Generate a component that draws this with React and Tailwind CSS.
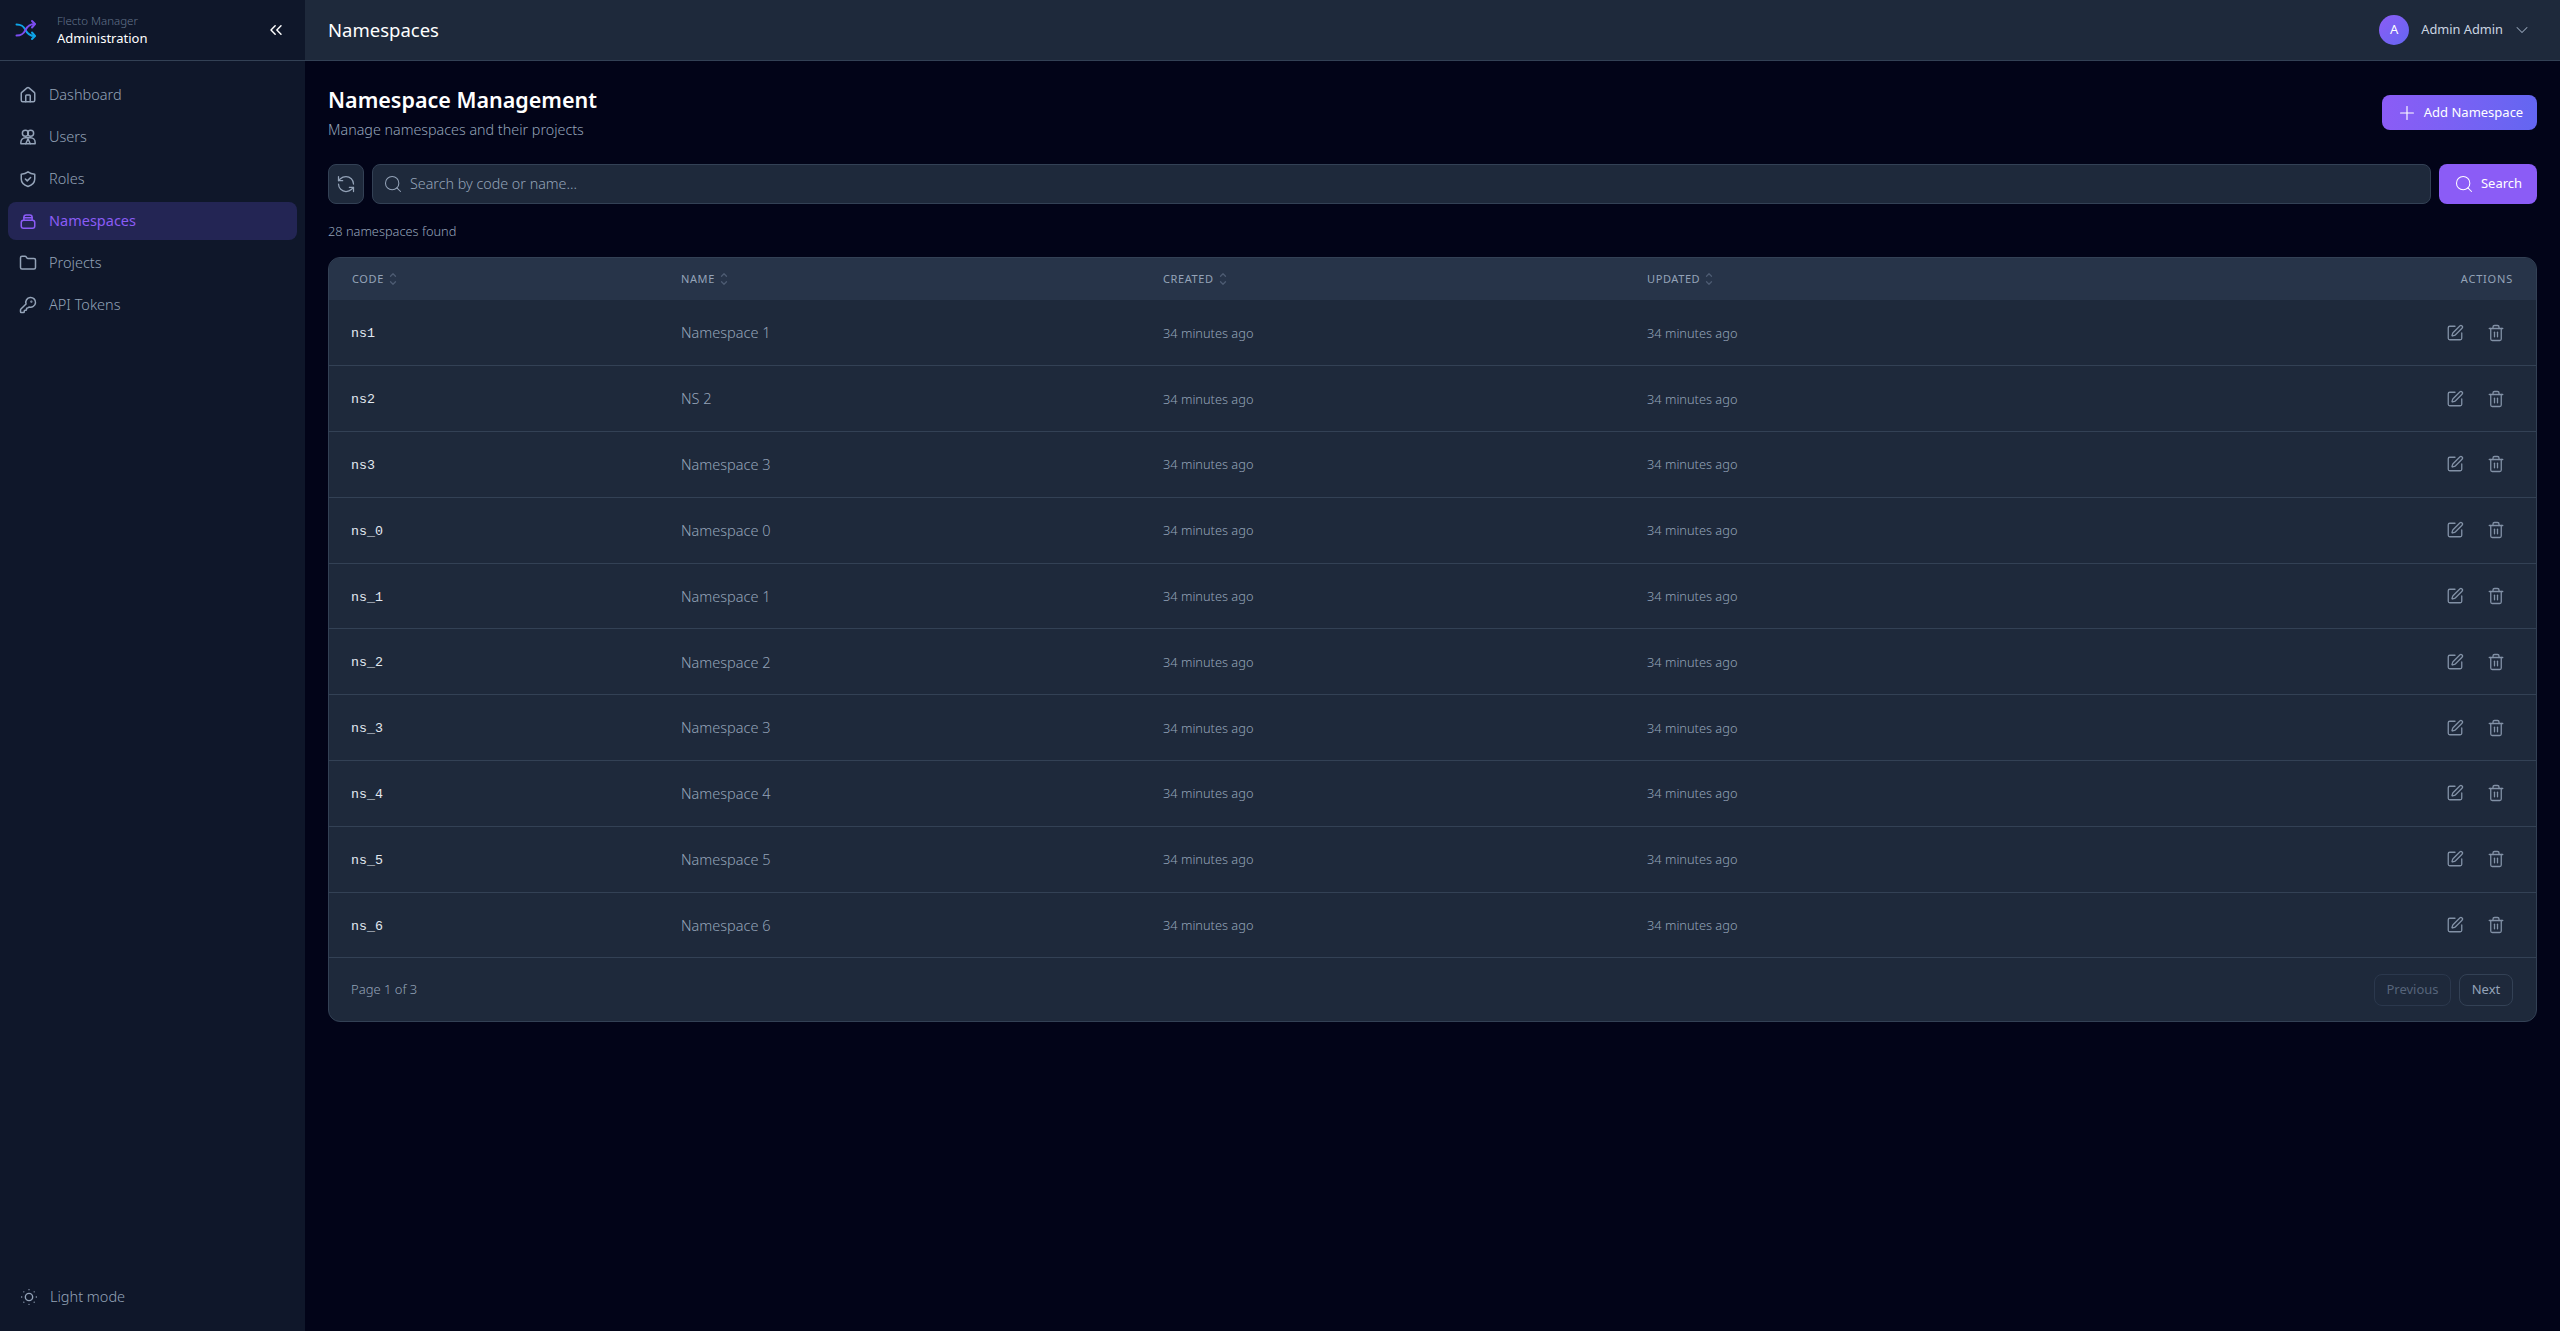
import React from "react";
import { House, Folder, KeyRound, ChevronsLeft, ChevronDown, Plus, Search, RefreshCcw, SquarePen, Trash2, SunDim, ChevronUp } from "lucide-react";

const F = "font-['Noto_Sans','Open_Sans',sans-serif]";

function Logo() {
  return (
    <svg width="22" height="22" viewBox="0 0 22 22" fill="none" strokeLinecap="round" strokeLinejoin="round" strokeWidth="2">
      <path d="M1.500 5.500c5 0 7 1.500 9 5.500s4 6 9 6" stroke="#0ea5e9" />
      <path d="M17 13.500l3 3.500-3 3" stroke="#0ea5e9" />
      <path d="M1.500 16.500c5 0 7-1.500 9-5.500s4-6 9-6" stroke="#7c4df0" />
      <path d="M17 2l3 3-3 3.500" stroke="#7c4df0" />
    </svg>
  );
}

function UsersIcon() {
  return (
    <svg width="18" height="18" viewBox="0 0 24 24" fill="none" stroke="currentColor" strokeWidth="2" strokeLinecap="round" strokeLinejoin="round">
      <circle cx="8.500" cy="7" r="4" />
      <circle cx="15.500" cy="7" r="4" />
      <path d="M2.500 21v-2a6 6 0 0 1 6-6h7a6 6 0 0 1 6 6v2z" />
      <path d="M12 14.500l3 6.500M12 14.500l-3 6.500" />
    </svg>
  );
}

function ShieldCheckIcon() {
  return (
    <svg width="18" height="18" viewBox="0 0 24 24" fill="none" stroke="currentColor" strokeWidth="2" strokeLinecap="round" strokeLinejoin="round">
      <path d="M12 2.500c2.500 2 5.500 3 9 3.200v6.300c0 5-3.500 8.200-9 10-5.500-1.800-9-5-9-10V5.700c3.500-.2 6.500-1.200 9-3.200z" />
      <path d="M8.500 12l2.500 2.500 4.500-4.500" />
    </svg>
  );
}

function StackIcon() {
  return (
    <svg width="18" height="18" viewBox="0 0 24 24" fill="none" stroke="currentColor" strokeWidth="2" strokeLinecap="round" strokeLinejoin="round">
      <rect x="3" y="11" width="18" height="10.500" rx="3" />
      <path d="M6.500 11V7a3 3 0 0 1 3-3h5a3 3 0 0 1 3 3v4" />
      <path d="M6.500 7.500h11" />
    </svg>
  );
}

const nav = [
  ["Dashboard", <House size={18} strokeWidth={2} />],
  ["Users", <UsersIcon />],
  ["Roles", <ShieldCheckIcon />],
  ["Namespaces", <StackIcon />],
  ["Projects", <Folder size={18} strokeWidth={2} />],
  ["API Tokens", <KeyRound size={18} strokeWidth={2} />],
];

const rows = [
  ["ns1", "Namespace 1"],
  ["ns2", "NS 2"],
  ["ns3", "Namespace 3"],
  ["ns_0", "Namespace 0"],
  ["ns_1", "Namespace 1"],
  ["ns_2", "Namespace 2"],
  ["ns_3", "Namespace 3"],
  ["ns_4", "Namespace 4"],
  ["ns_5", "Namespace 5"],
  ["ns_6", "Namespace 6"],
];

function SortHead({ children }) {
  return (
    <span className="inline-flex items-center gap-[4px]">
      {children}
      <span className="flex flex-col text-[#4d5b72]">
        <ChevronUp size={10} strokeWidth={3} className="-mb-[2px]" />
        <ChevronDown size={10} strokeWidth={3} />
      </span>
    </span>
  );
}

export default function App() {
  return (
    <div className={`flex h-screen bg-[#020418] ${F} font-light`}>
      <aside className="flex w-[305px] shrink-0 flex-col bg-[#0f172a]">
        <div className="flex h-[61px] items-center border-b border-[#334155] pl-[15px] pr-[19px]">
          <Logo />
          <div className="ml-[20px] flex flex-col">
            <span className="text-[11.500px] leading-[17px] text-[#64748b]">Flecto Manager</span>
            <span className="text-[13px] font-normal leading-[19px] text-white">Administration</span>
          </div>
          <ChevronsLeft size={20} strokeWidth={1.75} className="ml-auto text-white" />
        </div>
        <nav className="flex flex-col gap-[4px] px-[8px] pt-[15px]">
          {nav.map(([label, icon]) => (
            <div
              key={label}
              className={`flex h-[38px] items-center gap-[12px] rounded-lg px-[11px] text-[14.500px] ${label === "Namespaces" ? "bg-[#232554] font-normal text-[#8b5cf6]" : "text-[#94a3b8]"}`}
            >
              {icon}
              <span>{label}</span>
            </div>
          ))}
        </nav>
        <div className="mt-auto flex items-center gap-[10px] px-[18px] pb-[23px] text-[14.500px] text-[#94a3b8]">
          <SunDim size={22} strokeWidth={1.5} />
          <span>Light mode</span>
        </div>
      </aside>
      <div className="flex min-w-0 flex-1 flex-col">
        <header className="flex h-[61px] shrink-0 items-center border-b border-[#334155] bg-[#1e293b] pl-[23px] pr-[28px]">
          <h1 className="text-[18.500px] font-normal text-white">Namespaces</h1>
          <div className="ml-auto flex items-center">
            <div className="flex h-[30px] w-[30px] items-center justify-center rounded-full bg-gradient-to-br from-[#8b5cf6] to-[#6366f1] text-[13px] font-normal text-white">A</div>
            <span className="ml-[12px] text-[12.800px] font-normal text-[#cbd5e1]">Admin Admin</span>
            <ChevronDown size={20} strokeWidth={1.25} className="ml-[9px] text-[#94a3b8]" />
          </div>
        </header>
        <main className="flex flex-col px-[23px] pt-[24px]">
          <div className="flex items-start justify-between">
            <div>
              <h2 className="text-[21.500px] font-semibold leading-[30px] text-white">Namespace Management</h2>
              <p className="mt-[4px] text-[14.300px] leading-[21px] text-[#94a3b8]">Manage namespaces and their projects</p>
            </div>
            <button className="mt-[10px] flex h-[35px] w-[155px] items-center justify-center gap-[6px] rounded-lg bg-gradient-to-r from-[#8b5cf6] to-[#6366f1] text-[13px] font-normal text-white">
              <Plus size={22} strokeWidth={1.25} />
              Add Namespace
            </button>
          </div>
          <div className="mt-[24px] flex h-[40px] gap-[8px]">
            <button className="flex w-[36px] items-center justify-center rounded-lg border border-[#334155] bg-[#1e293b] text-[#94a3b8]">
              <RefreshCcw size={20} strokeWidth={1.5} />
            </button>
            <div className="flex flex-1 items-center gap-[7px] rounded-lg border border-[#334155] bg-[#1e293b] pl-[10px]">
              <Search size={20} strokeWidth={1.25} className="text-[#94a3b8]" />
              <input placeholder="Search by code or name..." className="flex-1 bg-transparent text-[14.300px] outline-none placeholder:text-[#94a3b8]" />
            </div>
            <button className="flex w-[98px] items-center justify-center gap-[7px] rounded-lg bg-[#8b5cf6] text-[13px] font-normal text-white">
              <Search size={20} strokeWidth={1.25} />
              Search
            </button>
          </div>
          <p className="mt-[18px] text-[12.800px] leading-[18px] text-[#94a3b8]">28 namespaces found</p>
          <div className="mt-[17px] overflow-hidden rounded-xl border border-[#334155] bg-[#1e293b]">
            <table className="w-full table-fixed border-collapse">
              <colgroup>
                <col className="w-[329px]" />
                <col className="w-[482px]" />
                <col className="w-[484px]" />
                <col />
                <col className="w-[200px]" />
              </colgroup>
              <thead>
                <tr className="h-[42px] bg-[#273449] text-left text-[11px] font-normal uppercase tracking-[0.6px] text-[#94a3b8]">
                  <th className="pl-[23px] font-normal"><SortHead>Code</SortHead></th>
                  <th className="pl-[23px] font-normal"><SortHead>Name</SortHead></th>
                  <th className="pl-[23px] font-normal"><SortHead>Created</SortHead></th>
                  <th className="pl-[23px] font-normal"><SortHead>Updated</SortHead></th>
                  <th className="pr-[23px] text-right font-normal tracking-[0.8px]">Actions</th>
                </tr>
              </thead>
              <tbody>
                {rows.map(([code, name]) => (
                  <tr key={code} className="h-[65.800px] border-b border-[#334155]">
                    <td className="pl-[22px] pt-[3px] font-['Liberation_Mono',monospace] text-[13.300px] font-normal text-[#e2e8f0]">{code}</td>
                    <td className="pl-[23px] pt-[1px] text-[14.500px] text-[#94a3b8]">{name}</td>
                    <td className="pl-[23px] pt-[1px] text-[12.800px] text-[#94a3b8]">34 minutes ago</td>
                    <td className="pl-[23px] pt-[1px] text-[12.800px] text-[#94a3b8]">34 minutes ago</td>
                    <td className="pr-[31px]">
                      <div className="flex items-center justify-end gap-[23px] text-[#8291a6]">
                        <SquarePen size={18} strokeWidth={1.75} />
                        <Trash2 size={18} strokeWidth={1.75} />
                      </div>
                    </td>
                  </tr>
                ))}
              </tbody>
            </table>
            <div className="flex h-[63px] items-center justify-between pl-[22px] pr-[23px]">
              <span className="text-[13px] text-[#94a3b8]">Page 1 of 3</span>
              <div className="flex gap-[8px]">
                <button className="h-[32px] w-[77px] rounded-lg border border-[#2b384d] text-[13px] font-normal text-[#56647a]">Previous</button>
                <button className="h-[32px] w-[54px] rounded-lg border border-[#334155] text-[13px] font-normal text-[#94a3b8]">Next</button>
              </div>
            </div>
          </div>
        </main>
      </div>
    </div>
  );
}
